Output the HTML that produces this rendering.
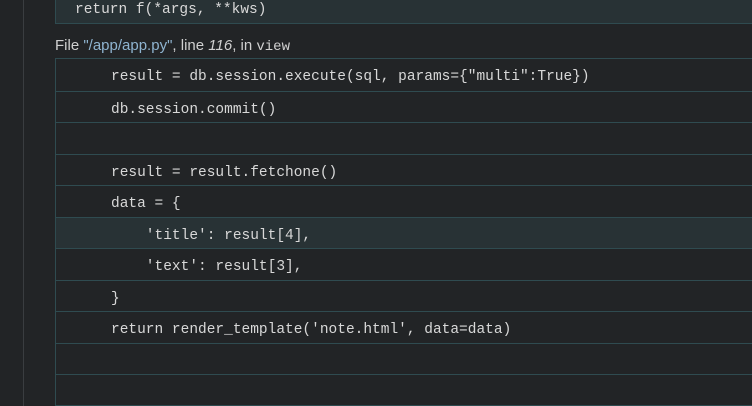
<!DOCTYPE html>
<html><head><style>
body{margin:0;width:752px;height:406px;background:#222426;overflow:hidden;position:relative;font-family:"Liberation Sans",sans-serif}
.vl{position:absolute;left:23px;top:0;width:1px;height:406px;background:#3a3d40}
.box{position:absolute;left:55px;width:720px;border:1px solid #2f4b50;box-sizing:border-box}
.row{height:31.5px;border-top:1px solid #2f4b50;box-sizing:border-box;font-family:"Liberation Mono",monospace;font-size:14.5px;color:#d8d8d8;line-height:36px;padding-left:55px;white-space:pre;overflow:hidden}
.row:first-child{border-top:none}
.hl{background:#283235}
.f{position:absolute;left:55px;top:37px;font-size:15px;color:#d0d0d0}
.f .p{color:#8fb4d0}
.f .m{font-family:"Liberation Mono",monospace;font-size:14px}
</style></head><body>
<div class="vl"></div>
<div class="box" style="top:-10px;height:34px;background:#283235"><div class="row" style="padding-left:19px;line-height:38px;height:34px">return f(*args, **kws)</div></div>
<div class="f">File <span class="p">"/app/app.py"</span>, line <i>116</i>, in <span class="m">view</span></div>
<div class="box" style="top:58px;height:348px">
<div class="row">result = db.session.execute(sql, params={"multi":True})</div>
<div class="row">db.session.commit()</div>
<div class="row"> </div>
<div class="row">result = result.fetchone()</div>
<div class="row">data = {</div>
<div class="row hl">    'title': result[4],</div>
<div class="row">    'text': result[3],</div>
<div class="row">}</div>
<div class="row">return render_template('note.html', data=data)</div>
<div class="row"> </div>
<div class="row"> </div>
</div>
</body></html>
